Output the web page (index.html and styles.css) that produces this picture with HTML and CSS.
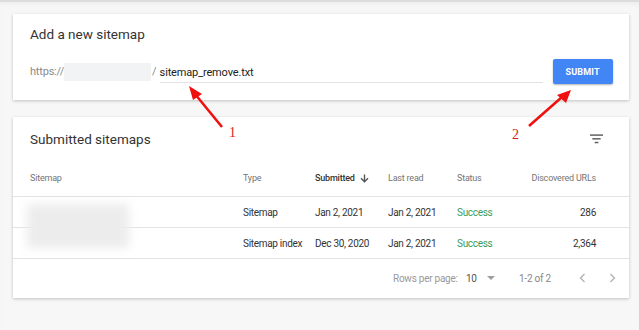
FILE: index.html
```html
<!DOCTYPE html>
<html lang="en">
<head>
    <meta charset="UTF-8">
    <meta name="viewport" content="width=device-width, initial-scale=1.0">
    <title>Sitemaps</title>
    <link rel="stylesheet" href="styles.css">
</head>
<body>
    <div class="page">
        <div class="card add-card">
            <h2 class="card-title">Add a new sitemap</h2>
            <div class="add-row">
                <span class="prefix">https://</span>
                <span class="domain"></span>
                <span class="slash">/</span>
                <div class="url-input">sitemap_remove.txt</div>
                <button class="submit">SUBMIT</button>
            </div>
        </div>

        <div class="card list-card">
            <div class="list-head">
                <h2 class="card-title">Submitted sitemaps</h2>
                <svg class="filter-icon" width="13" height="10" viewBox="0 0 14 10">
                    <rect x="0" y="0" width="14" height="1.6" fill="#616161"/>
                    <rect x="2.5" y="4" width="9" height="1.6" fill="#616161"/>
                    <rect x="5" y="8" width="4" height="1.6" fill="#616161"/>
                </svg>
            </div>

            <div class="row head-row">
                <div>Sitemap</div>
                <div>Type</div>
                <div class="sorted">Submitted
                    <svg width="9" height="9" viewBox="0 0 9 9">
                        <path d="M4.5 0.5 V7.5 M1 4.3 L4.5 7.8 L8 4.3" stroke="#555" stroke-width="1.4" fill="none"/>
                    </svg>
                </div>
                <div>Last read</div>
                <div>Status</div>
                <div class="num">Discovered URLs</div>
            </div>
            <div class="row">
                <div></div>
                <div>Sitemap</div>
                <div>Jan 2, 2021</div>
                <div>Jan 2, 2021</div>
                <div class="ok">Success</div>
                <div class="num">286</div>
            </div>
            <div class="row">
                <div></div>
                <div>Sitemap index</div>
                <div>Dec 30, 2020</div>
                <div>Jan 2, 2021</div>
                <div class="ok">Success</div>
                <div class="num">2,364</div>
            </div>
            <div class="pager">
                <span class="pager-label">Rows per page:</span>
                <span class="pager-size">10</span>
                <span class="caret"></span>
                <span class="pager-range">1-2 of 2</span>
                <svg class="pager-nav" width="7" height="10" viewBox="0 0 7 10">
                    <path d="M5.5 1 L1.5 5 L5.5 9" stroke="#b0b0b0" stroke-width="1.3" fill="none"/>
                </svg>
                <svg class="pager-nav" width="7" height="10" viewBox="0 0 7 10">
                    <path d="M1.5 1 L5.5 5 L1.5 9" stroke="#b0b0b0" stroke-width="1.3" fill="none"/>
                </svg>
            </div>
            <div class="blurred"></div>
        </div>

        <svg class="marks" width="639" height="330" viewBox="0 0 639 330">
            <line x1="222" y1="125" x2="195" y2="92" stroke="#f01010" stroke-width="2.6"/>
            <polygon points="189,84 202,92 193,98" fill="#f01010"/>
            <line x1="529" y1="124" x2="562" y2="95" stroke="#f01010" stroke-width="2.6"/>
            <polygon points="571,88 566,101 557,93" fill="#f01010"/>
            <text x="229" y="135" class="mark-num">1</text>
            <text x="512" y="137" class="mark-num">2</text>
        </svg>
    </div>
</body>
</html>
```

FILE: styles.css
```css
:root {
    --bg-color: #f7f7f7;
    --text-color: #212121;
    --muted: #757575;
    --line: #e3e3e3;
    --accent: #4285f4;
    --ok: #3a9c5c;
}

body {
    margin: 0;
    background-color: var(--bg-color);
    font-family: Roboto, 'Liberation Sans', sans-serif;
    color: var(--text-color);
}

.page {
    position: relative;
    width: 639px;
    height: 330px;
    padding: 14px 10px 0 13px;
    box-sizing: border-box;
    border-top: 2px solid #dcdcdc;
    box-shadow: inset 0 4px 4px -2px #ececec;
}

.card {
    background: #fff;
    width: 616px;
    box-shadow: 0 1px 3px rgba(0, 0, 0, 0.22);
}

.card-title {
    margin: 0;
    font-size: 13.5px;
    font-weight: 400;
    color: #333;
}

/* add sitemap */
.add-card {
    height: 86px;
    margin-top: -2px;
    padding: 12px 16px 0 17px;
    box-sizing: border-box;
}

.add-row {
    display: flex;
    align-items: center;
    margin-top: 17px;
    font-size: 11px;
    white-space: nowrap;
}

.prefix {
    color: #8a8a8a;
    letter-spacing: -0.2px;
}

.domain {
    width: 87px;
    height: 18px;
    background: #f2f3f5;
}

.slash {
    color: #8a8a8a;
    margin: 0 3px 0 1px;
}

.url-input {
    width: 383px;
    padding: 4px 0 3px;
    border-bottom: 1px solid #e3e3e3;
    color: #222;
    margin-top: 2px;
    letter-spacing: -0.15px;
}

.submit {
    margin-left: 10px;
    width: 60px;
    height: 25px;
    border: none;
    border-radius: 2px;
    background: var(--accent);
    color: #fff;
    font-family: Roboto, 'Liberation Sans', sans-serif;
    font-size: 9px;
    font-weight: 700;
    letter-spacing: 0.2px;
    box-shadow: 0 1px 2px rgba(0, 0, 0, 0.3);
}

/* submitted list */
.list-card {
    position: relative;
    margin-top: 17px;
    height: 181px;
}

.list-head {
    display: flex;
    align-items: center;
    justify-content: space-between;
    height: 43px;
    padding: 0 26px 0 17px;
}

.row {
    display: grid;
    grid-template-columns: 213px 72px 73px 69px 70px 1fr;
    align-items: center;
    height: 30px;
    padding: 0 33px 0 17px;
    border-top: 1px solid var(--line);
    font-size: 10px;
    letter-spacing: -0.3px;
    color: #333;
    white-space: nowrap;
}

.head-row {
    height: 36px;
    border-top: none;
    font-size: 9px;
    letter-spacing: -0.2px;
    color: var(--muted);
}

.sorted {
    display: flex;
    align-items: center;
    gap: 5px;
    color: #333;
    font-weight: 500;
}

.num {
    text-align: right;
}

.ok {
    color: var(--ok);
}

.pager {
    display: flex;
    align-items: center;
    height: 38px;
    padding-left: 380px;
    border-top: 1px solid var(--line);
    font-size: 10px;
    letter-spacing: -0.25px;
    color: #999;
    white-space: nowrap;
}

.pager-label {
    width: 73px;
}

.pager-size {
    width: 21px;
    color: #555;
}

.caret {
    width: 0;
    height: 0;
    border-left: 4px solid transparent;
    border-right: 4px solid transparent;
    border-top: 4px solid #9e9e9e;
}

.pager-range {
    margin-left: 24px;
    color: #888;
}

.pager-nav {
    margin-left: 28px;
}

.pager-nav + .pager-nav {
    margin-left: 23px;
}

.blurred {
    position: absolute;
    left: 14px;
    top: 87px;
    width: 102px;
    height: 44px;
    background: #ececec;
    filter: blur(5px);
}

.marks {
    position: absolute;
    left: 0;
    top: 0;
    pointer-events: none;
}

.mark-num {
    font-family: 'Liberation Serif', serif;
    font-size: 14px;
    fill: #e21c1c;
}
```
